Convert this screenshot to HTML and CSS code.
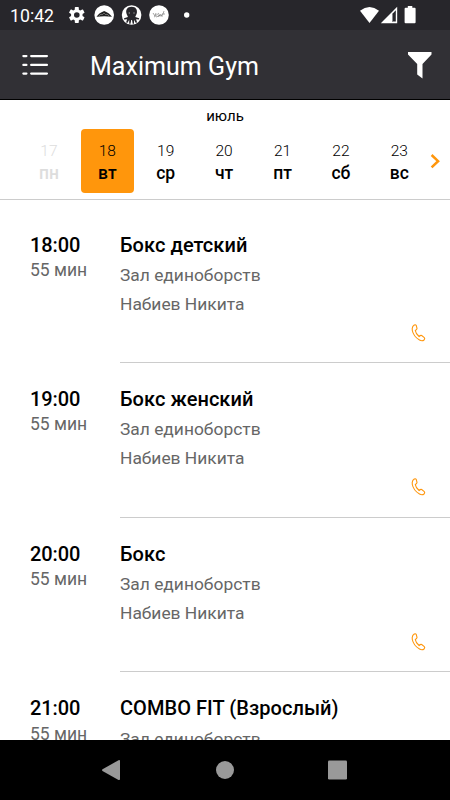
FILE: index.html
```html
<!DOCTYPE html>
<html lang="ru">
<head>
<meta charset="utf-8">
<title>Maximum Gym</title>
<link rel="stylesheet" href="styles.css">
</head>
<body>
<div class="screen">
  <div class="status">
    <span class="clock">10:42</span>
    <svg class="notices" width="128" height="30" viewBox="64 0 128 30">
      <g fill="#fff">
        <g transform="translate(76.8 15)">
          <circle r="5.8"/>
          <rect x="-2" y="-8" width="4" height="16" rx=".7"/><rect x="-2" y="-8" width="4" height="16" rx=".7" transform="rotate(60)"/><rect x="-2" y="-8" width="4" height="16" rx=".7" transform="rotate(120)"/>
          <circle r="2.8" fill="#27262b"/>
        </g>
        <circle cx="104.2" cy="15" r="9.8"/>
        <circle cx="131.6" cy="15" r="9.8"/>
        <circle cx="159" cy="15" r="9.8"/>
        <circle cx="186.7" cy="15" r="2.7"/>
      </g>
      <path d="M96.500 16.800q2-3.500 7.700-5.800 5.500 2.300 7.800 5.800-7.500-1-15.500 0z" fill="#222"/>
      <path d="M99 16l2-2 1 1 2-2 2 2 1-1 2 2" fill="none" stroke="#aaa" stroke-width=".5"/>
      <path d="M131.600 6.800c-4.300 0-5.800 3-5.300 6 .2 2 1.600 3.200 1.600 4.200l-3.800 1.200v1.300l3-.3-1 3.300 1.500.3 1.600-3v4h1.300l.7-3.800h.8l.7 3.800h1.300v-4l1.600 3 1.500-.3-1-3.300 3 .3v-1.300l-3.800-1.200c0-1 1.400-2.200 1.600-4.200.5-3-1-6-5.300-6z" fill="#27262b"/>
      <circle cx="129.300" cy="13" r=".7" fill="#999"/><circle cx="134" cy="13" r=".7" fill="#999"/>
      <path d="M153 13l2 3 1-3m-2 4c3-1 4-5 5-3s-2 3 0 2 2-3 2-1 2 0 3-4m-2 3h3m-9 3q3-2 7-1" fill="none" stroke="#666" stroke-width=".6"/>
    </svg>
    <svg class="signals" width="60" height="30" viewBox="358 0 60 30">
      <path d="M360 10.700q9.500-7.400 19 0L369.500 23z" fill="#fff"/>
      <path d="M397.200 6.700V23.300H380.800z" fill="#fff"/>
      <path d="M392 14.200L395.800 10.300V21.600H392z" fill="#27262b"/>
      <path d="M392 14.200L393 13.200V21.600H392z" fill="#8a898d"/>
      <path d="M407.800 6h4.500v1.800h2.300q1 0 1 1V22.200q0 1-1 1h-9q-1 0-1-1V8.800q0-1 1-1h2.200z" fill="#fff"/>
    </svg>
  </div>
  <header class="bar">
    <svg class="menu" width="28" height="24" viewBox="21 53 28 24" stroke="#fff" stroke-width="2.300" stroke-linecap="round">
      <path d="M23.400 56.100h3M31.200 56.100h15.700M23.400 64.900h3M31.200 64.900h15.700M23.400 73.600h3M31.200 73.600h15.700"/>
    </svg>
    <h1 class="title">Maximum Gym</h1>
    <svg class="filter" width="26" height="28" viewBox="407 51 26 28"><path d="M408 52h23.500v2.500L422.500 64v14.500l-5.300-4V64L408 54.500z" fill="#fff"/></svg>
  </header>
  <section class="calendar">
    <div class="month">июль</div>
    <div class="week">
      <div class="day past"><span class="num">17</span><b>пн</b></div>
      <div class="day active"><span class="num">18</span><b>вт</b></div>
      <div class="day"><span class="num">19</span><b>ср</b></div>
      <div class="day"><span class="num">20</span><b>чт</b></div>
      <div class="day"><span class="num">21</span><b>пт</b></div>
      <div class="day"><span class="num">22</span><b>сб</b></div>
      <div class="day"><span class="num">23</span><b>вс</b></div>
      <svg class="next" width="12" height="18" viewBox="429 152 12 18"><path d="M431.600 155l6.500 6.200-6.500 6.200" fill="none" stroke="#ff960c" stroke-width="2.500"/></svg>
    </div>
  </section>
  <main class="list">
    <article class="row">
      <div class="when"><div class="time">18:00</div><div class="length">55 мин</div></div>
      <div class="info"><h2>Бокс детский</h2><p>Зал единоборств</p><p>Набиев Никита</p>
        <svg class="phone" width="16" height="20" viewBox="0 0 16 20"><path id="handset" d="M1.800 3.400L3.300 2Q4.600 1.300 5.300 2.600L6 5.400Q6 6.400 4.300 7.500Q4.700 10.700 8.100 13.500Q9.600 12 10.700 12.500L13.300 14.600Q14.300 15.700 13 17Q11.200 18.500 8.500 17Q2.500 13.500 1.300 7.500Q.9 5 1.800 3.400z"/></svg></div>
    </article>
    <article class="row">
      <div class="when"><div class="time">19:00</div><div class="length">55 мин</div></div>
      <div class="info"><h2>Бокс женский</h2><p>Зал единоборств</p><p>Набиев Никита</p>
        <svg class="phone" width="16" height="20" viewBox="0 0 16 20"><use href="#handset"/></svg></div>
    </article>
    <article class="row">
      <div class="when"><div class="time">20:00</div><div class="length">55 мин</div></div>
      <div class="info"><h2>Бокс</h2><p>Зал единоборств</p><p>Набиев Никита</p>
        <svg class="phone" width="16" height="20" viewBox="0 0 16 20"><use href="#handset"/></svg></div>
    </article>
    <article class="row">
      <div class="when"><div class="time">21:00</div><div class="length">55 мин</div></div>
      <div class="info"><h2>COMBO FIT (Взрослый)</h2><p>Зал единоборств</p></div>
    </article>
  </main>
  <nav class="nav">
    <svg width="450" height="60" viewBox="0 740 450 60" fill="#999">
      <path d="M102.500 769.200L118.500 760.300q1.500-.7 1.500.8v18q0 1.500-1.500.8L102.500 771q-1-.9 0-1.800z"/>
      <circle cx="225" cy="770" r="9"/>
      <rect x="328" y="760.500" width="19" height="19" rx="1.300"/>
    </svg>
  </nav>
</div>
</body>
</html>
```
FILE: styles.css
```css
* { box-sizing: border-box; }
body { margin: 0; font-family: Roboto, "Noto Sans", sans-serif; color: #000; }
svg { display: block; flex: none; }
.screen { width: 450px; height: 800px; display: flex; flex-direction: column; overflow: hidden; background: #fff; }
.status { height: 30px; flex: none; display: flex; align-items: center; background: #27262b; color: #fff; padding-left: 10px; }
.clock { width: 54px; font-size: 17.700px; line-height: 30px; padding-top: 2px; white-space: nowrap; }
.signals { margin-left: 166px; }
.bar { height: 70px; flex: none; display: flex; align-items: center; background: #313035; color: #fff; padding: 0 17px 0 21px; border-bottom: 1px solid #000; }
.title { margin: 4px auto 0 41px; font-size: 25px; line-height: 30px; font-weight: 400; letter-spacing: .04px; }
.calendar { height: 100px; flex: none; border-bottom: 1px solid #ccc; }
.month { height: 29px; padding-top: 7px; text-align: center; font-size: 15px; line-height: 18px; }
.week { display: flex; align-items: center; gap: 5.900px; padding-left: 22.700px; }
.day { width: 52.500px; height: 64px; padding-top: 11px; border-radius: 4px; text-align: center; line-height: 20px; }
.num { display: block; padding-top: 1px; font-size: 15.500px; font-weight: 300; }
.day b { display: block; margin-top: 2px; font-size: 17.500px; font-weight: 500; }
.past { color: #ddd; }
.active { background: #ff960c; }
.next { margin-left: -2px; }
.list { flex: 1; min-height: 0; overflow: hidden; padding-top: 8.500px; }
.row { display: flex; height: 154.600px; padding-left: 30px; }
.when { width: 90px; padding-top: 24px; }
.time { font-size: 20px; line-height: 24px; font-weight: 500; letter-spacing: -.1px; }
.length { margin-top: 1.400px; font-size: 17.500px; line-height: 24px; color: #666; }
.info { flex: 1; padding-top: 24px; border-bottom: 1px solid #ccc; }
.info h2 { margin: 0 0 4.300px; font-size: 20px; line-height: 24px; font-weight: 500; white-space: nowrap; letter-spacing: .05px; }
.info p { margin: 0; font-size: 17.400px; line-height: 28.800px; color: #666; }
.phone { margin: 4.500px 0 0 290.500px; fill: none; stroke: #ff960c; stroke-width: 1.100; }
.nav { height: 60px; flex: none; background: #000; }
```
